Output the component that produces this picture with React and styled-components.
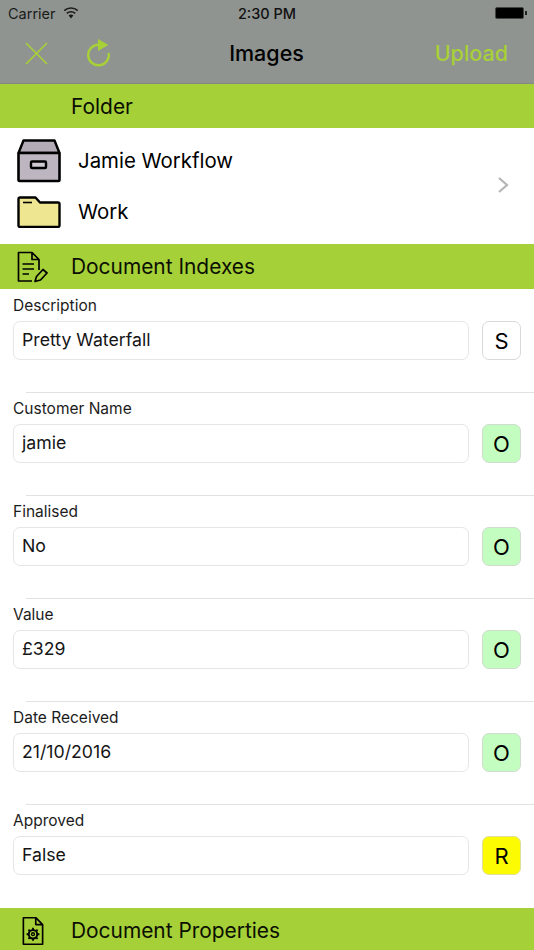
import React from "react";
import styled, { createGlobalStyle } from "styled-components";

const Global = createGlobalStyle`
  html, body {
    margin: 0;
    padding: 0;
    background: #fff;
  }
  body {
    font-family: Inter, "Liberation Sans", sans-serif;
    color: #000;
  }
`;

const Page = styled.div`
  width: 534px;
  height: 950px;
  overflow: hidden;
  display: flex;
  flex-direction: column;
`;

const Header = styled.header`
  height: 83px;
  background: #8f9490;
  border-bottom: 1px solid #858a86;
  display: flex;
  flex-direction: column;
`;

const StatusBar = styled.div`
  height: 26px;
  padding: 0 8px;
  display: grid;
  grid-template-columns: 1fr auto 1fr;
  align-items: center;
  font-size: 14.5px;
`;

const Carrier = styled.div`
  display: flex;
  align-items: center;
  gap: 7px;
  color: #1a1c1a;
`;

const Time = styled.div`
  font-weight: 500;
  color: #111;
`;

const Battery = styled.div`
  justify-self: end;
  display: flex;
  align-items: center;
  gap: 1px;
  margin-right: -1px;
  &::before {
    content: "";
    width: 27px;
    height: 10px;
    background: #000;
    border-radius: 2px;
    border: 1px solid #444;
  }
  &::after {
    content: "";
    width: 2px;
    height: 4px;
    background: #222;
  }
`;

const NavBar = styled.div`
  flex: 1;
  display: grid;
  grid-template-columns: 1fr auto 1fr;
  align-items: center;
  padding: 0 26px 3px 25px;
`;

const NavIcons = styled.div`
  display: flex;
  align-items: center;
  gap: 39px;
`;

const NavTitle = styled.div`
  font-size: 21.5px;
  font-weight: 500;
`;

const UploadLabel = styled.div`
  justify-self: end;
  font-size: 21.5px;
  font-weight: 500;
  color: #a8d037;
`;

const SectionBar = styled.div`
  height: ${(p) => p.$height}px;
  flex-shrink: 0;
  background: #a6d038;
  display: flex;
  align-items: center;
  padding: ${(p) => p.$nudge || "0"} 0 0 17px;
  box-sizing: border-box;
`;

const SectionIcon = styled.div`
  width: 54px;
  display: flex;
  align-items: center;
`;

const SectionTitle = styled.div`
  font-size: 20.9px;
  color: #0b0f02;
`;

const FolderPanel = styled.div`
  height: 116px;
  display: flex;
  align-items: center;
  justify-content: space-between;
  padding: 0 25px 2px 17px;
  box-sizing: border-box;
`;

const FolderList = styled.div`
  display: flex;
  flex-direction: column;
  gap: 7px;
  padding-top: 2px;
`;

const FolderRow = styled.div`
  display: flex;
  align-items: center;
  gap: 17px;
  height: 44px;
  font-size: 20.4px;
`;

const IndexRow = styled.div`
  height: ${(p) => (p.$last ? 104 : 103)}px;
  box-sizing: border-box;
  padding: 8px 13px 0;
  position: relative;
  &::after {
    content: "";
    display: ${(p) => (p.$last ? "none" : "block")};
    position: absolute;
    left: 26px;
    right: 0;
    bottom: -1px;
    height: 1px;
    background: #e2e2e2;
  }
`;

const IndexLabel = styled.div`
  font-size: 15.5px;
  line-height: 18px;
  color: #1c1c1c;
  margin-bottom: 6px;
`;

const IndexFields = styled.div`
  display: flex;
  gap: 13px;
`;

const ValueBox = styled.div`
  flex: 1;
  height: 39px;
  box-sizing: border-box;
  border: 1px solid #e6e6e6;
  border-radius: 7px;
  padding: 0 0 3px 8px;
  display: flex;
  align-items: center;
  font-size: 17.7px;
  color: #151515;
`;

const StatusBadge = styled.div`
  width: 39px;
  height: 39px;
  box-sizing: border-box;
  border: 1px solid ${(p) => p.$border};
  background: ${(p) => p.$bg};
  border-radius: 7px;
  display: flex;
  align-items: center;
  justify-content: center;
  font-size: 22px;
`;

const badgeStyles = {
  S: { bg: "#fff", border: "#d9d9d9" },
  O: { bg: "#c3fdc0", border: "#cfdccf" },
  R: { bg: "#fdfb02", border: "#dfdf9a" },
};

const indexes = [
  { label: "Description", value: "Pretty Waterfall", status: "S" },
  { label: "Customer Name", value: "jamie", status: "O" },
  { label: "Finalised", value: "No", status: "O" },
  { label: "Value", value: "£329", status: "O" },
  { label: "Date Received", value: "21/10/2016", status: "O" },
  { label: "Approved", value: "False", status: "R" },
];

const WifiIcon = () => (
  <svg width="16" height="12" viewBox="0 0 16 12">
    <path d="M8 11.5 5.6 8.6a3.6 3.6 0 0 1 4.8 0Z" fill="#1a1c1a" />
    <path d="M3.8 6.4a6.2 6.2 0 0 1 8.4 0M1.3 3.6a9.9 9.9 0 0 1 13.4 0" fill="none" stroke="#1a1c1a" strokeWidth="1.7" />
  </svg>
);

const CloseIcon = () => (
  <svg width="23" height="23" viewBox="0 0 23 23">
    <path d="M1 1 22 22M22 1 1 22" stroke="#a8d037" strokeWidth="1.6" fill="none" />
  </svg>
);

const RefreshIcon = () => (
  <svg width="24" height="28" viewBox="0 0 24 28">
    <path d="M11.5 5.7A10.3 10.3 0 1 0 21.6 14" fill="none" stroke="#a8d037" strokeWidth="2.4" />
    <path d="M11 0 21.5 6 11 12Z" fill="#a8d037" />
  </svg>
);

const ArchiveIcon = () => (
  <svg width="44" height="44" viewBox="0 0 44 44">
    <path d="M1.5 14 6.5 1.5h31l5 12.5Z" fill="#b3acb7" stroke="#000" strokeWidth="2.4" strokeLinejoin="round" />
    <rect x="1.5" y="14" width="41" height="28" rx="1" fill="#bdb5c0" stroke="#000" strokeWidth="2.6" />
    <rect x="14" y="22.5" width="15" height="6.5" rx="1" fill="#cfc9d2" stroke="#000" strokeWidth="2.4" />
  </svg>
);

const FolderIcon = () => (
  <svg width="44" height="32" viewBox="0 0 44 32">
    <path d="M1.5 3A1.5 1.5 0 0 1 3 1.5h15.5L23 6.5h18A1.5 1.5 0 0 1 42.500 8v21.500A1.500 1.500 0 0 1 41 31H3a1.500 1.500 0 0 1-1.500-1.500Z" fill="#efe692" stroke="#000" strokeWidth="2.4" strokeLinejoin="round" />
    <path d="M6 6.500h9" stroke="#000" strokeWidth="1.600" />
  </svg>
);

const Chevron = () => (
  <svg width="12" height="18" viewBox="0 0 12 18">
    <path d="M2 2 10 9 2 16" fill="none" stroke="#b5b5b5" strokeWidth="2.2" />
  </svg>
);

const DocEditIcon = () => (
  <svg width="31" height="32" viewBox="0 0 31 32" fill="none" stroke="#000" strokeWidth="1.7" strokeLinejoin="round">
    <path d="M15 30H1.500V1.500H15L22 8.500V19M15 1.500V8.500H22" />
    <path d="M5.500 13H17M5.500 18H17M5.500 23H12" />
    <path d="M18 30.500l1.500-5L26 18.500 30 22l-6.500 7Z" />
  </svg>
);

const DocGearIcon = () => (
  <svg width="22" height="30" viewBox="0 0 24 32" fill="none" stroke="#000" strokeLinejoin="round">
    <path d="M15 1.500H1.500v29h21V9Z M15 1.500V9h7.500" strokeWidth="1.800" />
    <circle cx="12" cy="19.500" r="4.600" strokeWidth="2.200" />
    <circle cx="12" cy="19.500" r="1.600" strokeWidth="1.400" />
    <path d="M12 12.500v2.400M12 24.100v2.400M5 19.500h2.400M16.600 19.500H19M7 14.500l1.800 1.800M15.200 22.700l1.800 1.800M7 24.500l1.800-1.800M15.200 16.300l1.800-1.800" strokeWidth="2" />
  </svg>
);

const GearSlot = styled(SectionIcon)`
  padding-left: 5px;
  width: 49px;
`;

export default function App() {
  return (
    <Page>
      <Global />
      <Header>
        <StatusBar>
          <Carrier>
            Carrier
            <WifiIcon />
          </Carrier>
          <Time>2:30 PM</Time>
          <Battery />
        </StatusBar>
        <NavBar>
          <NavIcons>
            <CloseIcon />
            <RefreshIcon />
          </NavIcons>
          <NavTitle>Images</NavTitle>
          <UploadLabel>Upload</UploadLabel>
        </NavBar>
      </Header>

      <SectionBar $height={44}>
        <SectionIcon />
        <SectionTitle>Folder</SectionTitle>
      </SectionBar>
      <FolderPanel>
        <FolderList>
          <FolderRow>
            <ArchiveIcon />
            Jamie Workflow
          </FolderRow>
          <FolderRow>
            <FolderIcon />
            Work
          </FolderRow>
        </FolderList>
        <Chevron />
      </FolderPanel>

      <SectionBar $height={45}>
        <SectionIcon>
          <DocEditIcon />
        </SectionIcon>
        <SectionTitle>Document Indexes</SectionTitle>
      </SectionBar>

      {indexes.map((item, i) => (
        <IndexRow key={item.label} $last={i === indexes.length - 1}>
          <IndexLabel>{item.label}</IndexLabel>
          <IndexFields>
            <ValueBox>{item.value}</ValueBox>
            <StatusBadge $bg={badgeStyles[item.status].bg} $border={badgeStyles[item.status].border}>
              {item.status}
            </StatusBadge>
          </IndexFields>
        </IndexRow>
      ))}

      <SectionBar $height={42} $nudge="3px">
        <GearSlot>
          <DocGearIcon />
        </GearSlot>
        <SectionTitle>Document Properties</SectionTitle>
      </SectionBar>
    </Page>
  );
}
